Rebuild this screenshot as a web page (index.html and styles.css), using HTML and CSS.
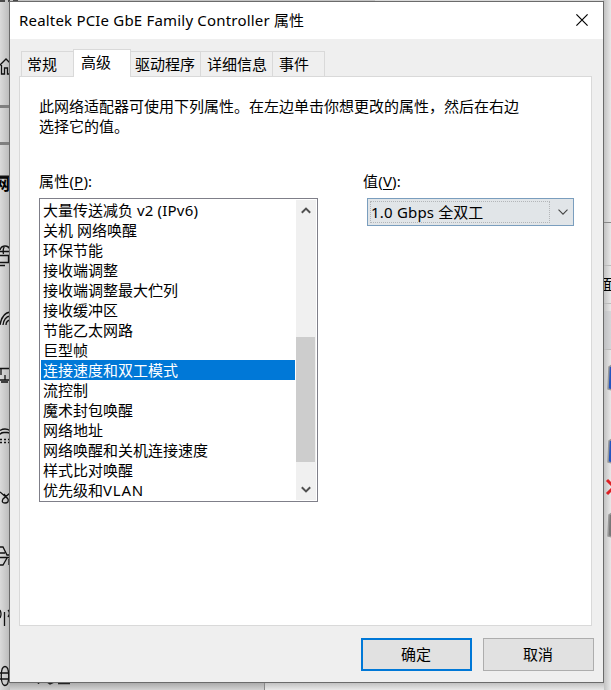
FILE: index.html
```html
<!DOCTYPE html>
<html lang="zh-CN">
<head>
<meta charset="utf-8">
<title>Realtek PCIe GbE Family Controller 属性</title>
<link rel="stylesheet" href="styles.css">
</head>
<body>
<div class="desktop">
  <svg class="backdrop" width="611" height="690" viewBox="0 0 611 690" aria-hidden="true">
    <defs>
      <linearGradient id="left"><stop offset="0" stop-color="#dadada"/><stop offset="1" stop-color="#bababa"/></linearGradient>
      <linearGradient id="right"><stop offset="0" stop-color="#bdbdbd"/><stop offset="1" stop-color="#e8e8e8"/></linearGradient>
      <linearGradient id="bottom" x2="0" y2="1"><stop offset="0" stop-color="#a6a6a6"/><stop offset="1" stop-color="#d2d2d2"/></linearGradient>
      <linearGradient id="bottomRight" x2="0" y2="1"><stop offset="0" stop-color="#bcbcbc"/><stop offset="1" stop-color="#e9e9e9"/></linearGradient>
    </defs>
    <rect width="10" height="690" fill="url(#left)"/>
    <rect width="375" height="2" fill="#c4c4c4"/>
    <rect x="375" width="236" height="2" fill="#dadada"/>
    <rect x="603" width="8" height="690" fill="url(#right)"/>
    <rect x="10" y="682" width="254" height="8" fill="url(#bottom)"/>
    <rect x="264" y="682" width="340" height="8" fill="url(#bottomRight)"/>
    <path d="M264.500 682v8M604 222.500h7" stroke="#888"/>
    <path d="M604 265.500h7M604 303.500h7M604 349.500h7" stroke="#bbb"/>
    <rect x="604" y="311" width="7" height="38" fill="#b9bcc1" opacity=".4"/>
    <path d="M0 106.500h10M0 143.500h10" stroke="#7f7f7f" stroke-width="3"/>
    <path d="M0 1h5M8 1h2M13 1h5" stroke="#222" stroke-width="1.500"/>
    <g fill="none" stroke="#111" stroke-width="1.300">
      <path d="M-1 66 6 59l6 6M1.500 65v9h3v-6h3v6h3"/>
      <path d="M0 251.500h10M0 250q1-4 5-4t5 4M4.500 246q-2 4-1 8M0 255.500h8.500v7H0M0 265.500h5"/>
      <path d="M0 325q2-12 10-13M3 325q1-8 7-9M6 325q0-4 4-5"/>
      <path d="M0 368.500h10M1 369v6M0 380h10M5 375v5M1 382h7"/>
      <path d="M0 430.500q5-3 10 0M0 434.500q1-2 4-2h3q3 0 3 2"/>
      <path stroke-dasharray="2 2" d="M0 439.500h10M0 442.500h10"/>
      <path d="M0 492l7 6M10 493l-7 6q-2 4 2 4t3-4L4 494"/>
      <path d="M0 547h3l4 8h3M0 553h5M0 557.500h10M7 558l-4 7H0M9 565V559"/>
      <path d="M4.500 612v14M0 610q2 4 0 8M8 610q3 3 0 7"/>
      <path d="M5 666.500c5 0 5 19 0 19s-5-19 0-19M0 673h10M0 679h10"/>
    </g>
    <text x="-6" y="190" font-size="16" font-weight="700">网</text>
    <path d="M0 176.500h10" stroke="#111" stroke-width="2"/>
    <text x="600" y="290" font-size="15">面板</text>
    <path d="M38.500 682v2M47 682l3 2 4-2M58 683.500h12" fill="none" stroke="#222" stroke-width="1.500"/>
    <g stroke="#999" stroke-width="1.500">
      <path d="M612 365l-3 2-1 22 4 1z" fill="#2456bf"/>
      <path d="M612 439l-3 2-1 21 4 1z" fill="#2456bf"/>
      <path d="M612 513l-3 2-1 21 4 1z" fill="#777"/>
    </g>
    <path d="M607 480l7 7-7 7M607 494l7-7" stroke="#dd2024" stroke-width="3" fill="none"/>
  </svg>

  <main class="dialog">
    <header class="titlebar">
      <h1 class="title">Realtek PCIe GbE Family Controller <span class="cjk">属性</span></h1>
      <svg class="close" width="12" height="12" viewBox="0 0 12 12"><path d="M.4.400l11.200 11.200M11.600.400.400 11.600"/></svg>
    </header>
    <nav class="tabs">
      <div class="tab general">常规</div>
      <div class="tab selected">高级</div>
      <div class="tab driver">驱动程序</div>
      <div class="tab details">详细信息</div>
      <div class="tab events">事件</div>
    </nav>
    <section class="panel">
      <p class="hint">此网络适配器可使用下列属性。在左边单击你想更改的属性，然后在右边<br>选择它的值。</p>
      <div class="fields">
        <div class="properties">
          <div class="label">属性(<u>P</u>):</div>
          <div class="listbox">
            <ul class="items">
              <li>大量传送减负 <span class="latin">v2 (IPv6)</span></li>
              <li>关机 网络唤醒</li>
              <li>环保节能</li>
              <li>接收端调整</li>
              <li>接收端调整最大伫列</li>
              <li>接收缓冲区</li>
              <li>节能乙太网路</li>
              <li>巨型帧</li>
              <li class="active">连接速度和双工模式</li>
              <li>流控制</li>
              <li>魔术封包唤醒</li>
              <li>网络地址</li>
              <li>网络唤醒和关机连接速度</li>
              <li>样式比对唤醒</li>
              <li>优先级和<span class="latin wide">VLAN</span></li>
            </ul>
            <div class="scrollbar">
              <svg class="arrow" width="10" height="7" viewBox="0 0 10 7"><path d="M.8 5.800 5 1.600l4.200 4.200"/></svg>
              <div class="thumb"></div>
              <svg class="arrow down" width="10" height="7" viewBox="0 0 10 7"><path d="M.8 1.200 5 5.400l4.200-4.200"/></svg>
            </div>
          </div>
        </div>
        <div class="value">
          <div class="label">值(<u>V</u>):</div>
          <div class="combo">
            <div class="combo-text"><span class="latin">1.0 Gbps </span>全双工</div>
            <svg class="chevron" width="10" height="6" viewBox="0 0 10 6"><path d="M.5.700 5 5.200 9.500.700"/></svg>
          </div>
        </div>
      </div>
    </section>
    <footer class="actions">
      <button class="button primary">确定</button>
      <button class="button">取消</button>
    </footer>
  </main>
</div>
</body>
</html>
```
FILE: styles.css
```css
* {
  box-sizing: border-box;
}

body {
  margin: 0;
  overflow: hidden;
  font: 15px/20px "Noto Sans", "Noto Sans CJK SC", sans-serif;
  color: #000;
}

.desktop {
  position: relative;
  width: 611px;
  height: 690px;
  padding: 1px 0 0 9px;
  background: #d6d6d6;
}

.backdrop {
  position: absolute;
  inset: 0;
}

.dialog {
  position: relative;
  display: flex;
  flex-direction: column;
  width: 595px;
  height: 682px;
  border: 1px solid #6b6b6b;
  background: #efefef;
}

.titlebar {
  display: flex;
  flex: none;
  align-items: center;
  justify-content: space-between;
  height: 37px;
  padding: 0 15px 0 9px;
  background: #fff;
}

.title {
  margin: 0;
  padding-bottom: 2px;
  font-size: 15px;
  font-weight: 400;
  letter-spacing: 0.19px;
  white-space: pre;
}

.cjk {
  letter-spacing: 0;
}

.latin {
  letter-spacing: 0.2px;
}

.wide {
  letter-spacing: 0.8px;
}

.close {
  margin-bottom: 1px;
  fill: none;
  stroke: #000;
  stroke-width: 1.2;
}

.tabs {
  display: flex;
  flex: none;
  align-items: flex-end;
  height: 37px;
  padding-left: 11px;
}

.tab {
  height: 25px;
  padding: 2px 0 0 5px;
  border: 1px solid #d9d9d9;
  border-bottom: 0;
  border-right: 0;
  white-space: nowrap;
}

.general {
  width: 52px;
}

.tab.selected {
  z-index: 1;
  width: 58px;
  height: 28px;
  margin-bottom: -1px;
  padding: 2px 0 0 7px;
  border-right: 1px solid #d9d9d9;
  background: #fff;
}

.driver {
  width: 69px;
  padding-left: 4px;
  border-left: 0;
}

.details {
  width: 72px;
  padding-left: 6px;
}

.events {
  width: 53px;
  padding-left: 6px;
  border-right: 1px solid #d9d9d9;
}

.panel {
  flex: none;
  width: 573px;
  height: 550px;
  margin-left: 9px;
  padding: 19px 17px 0 19px;
  border: 1px solid #d9d9d9;
  background: #fff;
}

.hint {
  margin: 0 0 35px;
  white-space: nowrap;
}

.fields {
  display: flex;
  gap: 45px;
}

.properties {
  width: 279px;
}

.label {
  height: 27px;
  letter-spacing: 0.2px;
}

.label u {
  text-underline-offset: 2px;
  text-decoration-thickness: 1px;
}

.listbox {
  display: flex;
  height: 304px;
  padding: 1px;
  border: 1px solid #7f7f89;
}

.items {
  width: 254px;
  margin: 0;
  padding: 0;
  list-style: none;
}

.items li {
  height: 20px;
  padding-left: 2px;
  white-space: nowrap;
}

.items .active {
  background: #0078d7;
  color: #fff;
}

.scrollbar {
  display: flex;
  flex-direction: column;
  align-items: center;
  width: 20px;
  margin-left: 1px;
  padding: 7px 0;
  background: #f0f0f0;
}

.thumb {
  width: 19px;
  height: 125px;
  margin: 123px 1px 0 0;
  background: #cdcdcd;
}

.arrow {
  flex: none;
  fill: none;
  stroke: #505050;
  stroke-width: 2;
}

.down {
  margin-top: auto;
}

.combo {
  display: flex;
  align-items: center;
  justify-content: space-between;
  width: 207px;
  height: 28px;
  margin-left: 4px;
  padding: 0 5px 0 2px;
  border: 1px solid #7a9ebe;
  background: #e1e5e8;
}

.combo-text {
  width: 180px;
  height: 22px;
  border: 1px dotted #b3b6b9;
  white-space: nowrap;
}

.chevron {
  fill: none;
  stroke: #444;
  stroke-width: 1.1;
}

.actions {
  display: flex;
  gap: 11px;
  justify-content: flex-end;
  padding: 12px 9px 0 0;
}

.button {
  width: 111px;
  height: 33px;
  padding: 0 1px 2px 0;
  border: 1px solid #adadad;
  background: #e1e1e1;
  font: inherit;
  color: inherit;
}

.primary {
  border: 2px solid #0078d7;
}
```
